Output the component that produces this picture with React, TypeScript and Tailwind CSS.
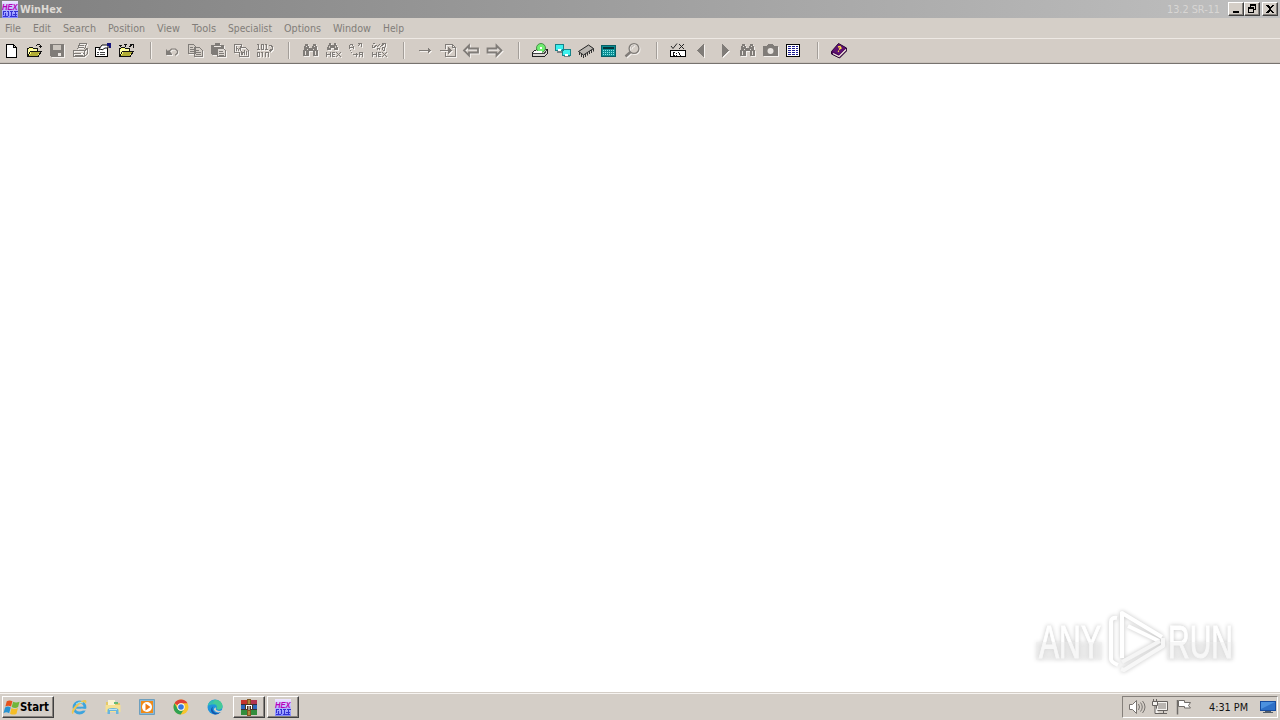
import React from 'react';

type Draw = React.ReactNode;

const ui = 'font-[DejaVu_Sans_Condensed,Noto_Sans,sans-serif]';
const raised =
  'border border-t-white border-l-white border-r-[#404040] border-b-[#404040] shadow-[inset_-1px_-1px_0_#87827d] bg-[#d4cec7]';

const G = '#807c78';

const menus: { label: string; cell: string; width: number }[] = [
  { label: 'File', cell: 'w-7', width: 16 },
  { label: 'Edit', cell: 'w-[30px]', width: 18 },
  { label: 'Search', cell: 'w-[45px]', width: 33 },
  { label: 'Position', cell: 'w-[49px]', width: 37 },
  { label: 'View', cell: 'w-[35px]', width: 23 },
  { label: 'Tools', cell: 'w-[36px]', width: 24 },
  { label: 'Specialist', cell: 'w-[56px]', width: 44 },
  { label: 'Options', cell: 'w-[49px]', width: 37 },
  { label: 'Window', cell: 'w-[50px]', width: 38 },
  { label: 'Help', cell: 'w-[34px]', width: 21 },
];

/* Single-line label fitted to the width of the bitmap system font. */
function Label({ text, width, size = 11, bold = false, fill }: { text: string; width: number; size?: number; bold?: boolean; fill: string }) {
  return (
    <svg width={width + 2} height="15" className="shrink-0 overflow-visible">
      <text x="0" y="11" fontSize={size} fontWeight={bold ? 700 : 400} fill={fill} textLength={width} lengthAdjust="spacingAndGlyphs" className={ui}>
        {text}
      </text>
    </svg>
  );
}

function Tool({ children, off = false }: { children: Draw; off?: boolean }) {
  return (
    <svg
      width="23"
      height="18"
      viewBox="0 0 23 18"
      shapeRendering="crispEdges"
      className={off ? 'shrink-0 drop-shadow-[1px_1px_0_#f4f1ee]' : 'shrink-0'}
    >
      {children}
    </svg>
  );
}

function Sep() {
  return (
    <div className="flex h-[17px] w-[23px] shrink-0 pl-3">
      <div className="w-px bg-[#a39e99]" />
      <div className="w-px bg-[#f3efeb]" />
    </div>
  );
}

const folder = (
  <>
    <path d="M4.5 14.5V6.5h1l1-1h3l1 1h4v2M4.5 14.5l3-5h11l-3.5 5z" fill="#ffff77" stroke="#111" />
    <path d="M5 13V7h9v2H7z" fill="#ffffa8" />
    <path d="M6 14l2.500-4h8.500l-2.500 4z" fill="#b3ae35" />
  </>
);

const binoculars = (
  <>
    <path d="M6 2h3v2h1v2h3V4h1V2h3v2h1v4h1v6h-5V9h-4v5H4V8h1V4h1z" fill={G} />
    <path d="M7 4h1M15 4h1M6 9v4M16 9v4M8 7h1M13.500 7h1" stroke="#e6e1dc" />
  </>
);

const smallBinoculars = (
  <>
    <path d="M7 1h2v2h3V1h2v2h1v2h1v3h-4V6H9v2H5V5h1V3h1z" fill={G} />
    <path d="M7.500 4v2M13.500 4v2" stroke="#d4cec7" />
  </>
);

const hexWord = (
  <path d="M4.500 10v5M8.500 10v5M4 12.500h4M10.500 10v5M10 10.500h3M10 12.500h3M10 14.500h3M14 10.500h1M15 11.500h1M16 12.500h1M15 13.500h1M14 14.500h1M17 11.500h1M18 10.500h1M17 13.500h1M18 14.500h1" stroke={G} fill="none" />
);

const groups: { off?: boolean; art: Draw }[][] = [
  [
    { art: <path d="M6.500 2.500h7l3 3v9.500h-10zM13.500 2.500v3h3" fill="#fff" stroke="#000" /> },
    { art: <>{folder}<path d="M12.500 3.500h1l1-1h2l1 1v2M15.500 4.500h3" stroke="#111" fill="none" /></> },
    {
      off: true,
      art: (
        <>
          <path d="M4 2h14v13H5l-1-1z" fill={G} />
          <path d="M7 3h8v5H7z" fill="#cbc5be" />
          <path d="M12 11h3v3h-3z" fill="#e9e5e1" />
        </>
      ),
    },
    {
      off: true,
      art: (
        <>
          <path d="M8.500 7.500l2-6h7l-2 6M10 3.500h5M9.500 5.500h5M4.500 8.500h11l3-2v5l-3 3h-11zM15.500 8.500v5M5 11.500h10M6 13.500h8M15.500 9l3-3" fill="none" stroke={G} />
          <path d="M12 11h2v1h-2z" fill="#fff" />
        </>
      ),
    },
    {
      art: (
        <>
          <path d="M3.500 5.500h12v9h-12z" fill="#fff" stroke="#000" />
          <path d="M5 10.500h2M8 10.500h5M5 12.500h2M8 12.500h5" stroke="#444" />
          <path d="M7 7l3-4h6v3h-3l-3 2-1-1-2 1z" fill="#fff" stroke="#111" shapeRendering="auto" />
          <path d="M15 1h4v5h-2V4h-2z" fill="#16167c" />
        </>
      ),
    },
    { art: <>{folder}<path d="M6.500 6L5 3M4 3.500h3M10.500 5V1.500M9 2.500h3M14.500 5l3-3M15 2.500h3v3" fill="none" stroke="#111" /></> },
  ],
  [
    {
      off: true,
      art: (
        <>
          <path d="M5 7l2 2 1-1 3 4v1H5z" fill={G} shapeRendering="auto" />
          <path d="M8 9.500l2.500-2.500h4l2 2v2l-2 2H14" fill="none" stroke={G} strokeWidth="1.200" shapeRendering="auto" />
        </>
      ),
    },
    { off: true, art: <path d="M4.500 2.500h5l2 2v7h-7zM6 5.500h3M6 7.500h4M6 9.500h4M10.500 5.500h5l3 3v6h-8zM12 8.500h3M12 10.500h5M12 12.500h5" fill="#d4cec7" stroke={G} /> },
    {
      off: true,
      art: (
        <>
          <path d="M4 3h4V1h5v2h4v10H5l-1-1z" fill={G} />
          <path d="M7 4h7v1H7z" fill="#ece7e2" />
          <path d="M10.500 6.500h6l2 2v6h-8zM12 9.500h4M12 11.500h5M12 13h5" fill="#ddd8d3" stroke={G} />
        </>
      ),
    },
    { off: true, art: <path d="M4.500 2.500h7v3h4l3 3v6h-9v-4h-5zM6.500 9V5l2 3 2-3v4M11.500 13V9l1 3 2-3v4M16.500 9v4" fill="none" stroke={G} /> },
    {
      off: true,
      art: <path d="M4 2.500h1.500v5M4 7.500h3M8.500 2.500h2v5h-2zM12 2.500h1.500v5M12 7.500h3M4.500 10.500h2v4h-2zM8 10.500h1.500v4M12.500 15v-4.500h3V15M16 3.500h2l1 1v3l-1 1h-2M17 7v3" fill="none" stroke={G} />,
    },
  ],
  [
    { off: true, art: binoculars },
    { off: true, art: <>{smallBinoculars}{hexWord}</> },
    {
      off: true,
      art: <path d="M4.500 7V4l1.500-2h1l1 2v3M4 5.500h4M12.500 4.500l3-3M13 1.500h3v3M5 8.500h1M6 10.500h1M8 12.500h5M11.500 10.500v4M14.500 15v-5h3v5M15 12.500h3" fill="none" stroke={G} />,
    },
    { off: true, art: <>{hexWord}<path d="M5 1.500h2M4.500 3v2h2l2-2M9 5l3-3M12.500 4.500l4-3M14 1.500h3v3M9.500 8V6h2v2M14.500 8V5h2v3h-2" fill="none" stroke={G} /></> },
  ],
  [
    { off: true, art: <path d="M5 8h9V6h1v1h1v1h1v1h-1v1h-1v1h-1V9H5z" fill={G} /> },
    { off: true, art: <><path d="M8.500 7V2.500h7l3 3v9h-10V10M15.500 2.500v3h3M3 8.500h10" fill="none" stroke={G} /><path d="M11 5l4 3.500-4 3.500z" fill={G} /></> },
    { off: true, art: <path d="M4 8.500l5-5v3h9v4H9v3z" fill="none" stroke={G} strokeWidth="1.800" shapeRendering="auto" /> },
    { off: true, art: <path d="M18.500 8.500l-5-5v3h-9v4h9v3z" fill="none" stroke={G} strokeWidth="1.800" shapeRendering="auto" /> },
  ],
  [
    {
      art: (
        <>
          <path d="M3.500 10.500l4-3h11v4l-3 3h-12z" fill="#d9d5d1" stroke="#222" />
          <circle cx="12" cy="6" r="4.500" fill="#70ef70" stroke="#4b8c4b" shapeRendering="auto" />
          <path d="M11 5h2v2h-2zM5 9h8v2H5z" fill="#fff" />
          <path d="M4 11.500h12M15 12l3-4" stroke="#444" />
        </>
      ),
    },
    {
      art: (
        <>
          <path d="M3.500 2.500h8v6h-8zM10.500 7.500h8v6h-8z" fill="#3df1ee" stroke="#16838a" />
          <path d="M5 9h5v2H5zM12 14h6v1h-6z" fill="#7c8387" />
          <path d="M6 7h3v2H6zM13 12h3v2h-3z" fill="#fff" />
        </>
      ),
    },
    {
      art: (
        <g shapeRendering="auto">
          <path d="M3.500 9.500L13.500 3l5 3.500-10 6.500z" fill="#b8b4af" stroke="#222" />
          <path d="M4.500 10v3M6.500 12v3M8.500 13v3M10.500 12v3M12.500 10.500v3M14.500 9v3M16.500 8v3M18.500 6.500v3" stroke="#333" />
        </g>
      ),
    },
    {
      art: (
        <>
          <path d="M3.500 3.500h14v10.500h-14z" fill="#0b8f95" stroke="#075f65" />
          <path d="M5 5h11v2H5z" fill="#06363a" />
          <path d="M5 8.500h12M5 10.500h12M5 12.500h12" stroke="#88eaea" strokeDasharray="1 1" />
        </>
      ),
    },
    {
      off: true,
      art: (
        <g shapeRendering="auto" fill="none" stroke={G}>
          <circle cx="13" cy="6.500" r="4.900" strokeWidth="1.300" />
          <path d="M9.500 10l-5 4.500" strokeWidth="2.500" />
          <path d="M10 6.500q0-3 3-3" stroke="#bbb5b0" />
        </g>
      ),
    },
  ],
  [
    {
      art: (
        <>
          <path d="M3.500 8.500h15v6h-15z" fill="#fff" stroke="#000" />
          <path d="M4 4l2 2.500L10 1.500M12 2l5 5M17 2l-5 5" fill="none" stroke="#222" shapeRendering="auto" />
          <path d="M8 10.500H6v3h2M9.500 11v1M9.500 13v1M11.500 10l2 4" fill="none" stroke="#111" />
        </>
      ),
    },
    { off: true, art: <path d="M14 2v13L7 8.500z" fill={G} /> },
    { off: true, art: <path d="M9 2v13l7-6.500z" fill={G} /> },
    { off: true, art: binoculars },
    {
      off: true,
      art: (
        <>
          <path d="M4 4h4l1-2h5l1 2h4v10H4z" fill={G} />
          <circle cx="11.500" cy="9" r="3" fill="#e7e3df" shapeRendering="auto" />
        </>
      ),
    },
    {
      art: (
        <>
          <path d="M4.500 2.500h13v12h-13z" fill="#fff" stroke="#050505" />
          <path d="M6 4.500h3M10 4.500h3M14 4.500h2M6 6.500h3M10 6.500h3M14 6.500h2M6 8.500h3M10 8.500h3M14 8.500h2M6 10.500h3M10 10.500h3M14 10.500h2M6 12.500h3M10 12.500h3M14 12.500h2" stroke="#1c1c91" />
        </>
      ),
    },
  ],
  [
    {
      art: (
        <g shapeRendering="auto">
          <path d="M3.500 9.500l7-8 8 4.500v3l-7 7-8-4z" fill="#4e075f" stroke="#24062e" />
          <path d="M5 11.500l6 3 7-7" fill="none" stroke="#f7f2df" strokeWidth="1.200" />
          <path d="M4.500 9l6-7 7 4-6 6.500z" fill="#5e1272" />
          <path d="M10 5l2-.5 1 1.500-2 1.300M10 9l1 .5" stroke="#ffd84a" strokeWidth="1.400" fill="none" />
        </g>
      ),
    },
  ],
];

function HexLogo() {
  return (
    <svg width="18" height="17" viewBox="0 0 18 17" className="shrink-0 overflow-visible">
      <defs>
        <linearGradient id="hexBlue" x2="0" y2="1">
          <stop stopColor="#eee6ff" />
          <stop offset="1" stopColor="#8289ff" />
        </linearGradient>
      </defs>
      <path fill="url(#hexBlue)" d="M1 0h16v17H1z" />
      <text x="1" y="8.500" textLength="15.500" lengthAdjust="spacingAndGlyphs" fontSize="9.500" className="font-['Liberation_Sans',sans-serif]" fontWeight="700" fontStyle="italic" fill="#b900b8">HEX</text>
      <path d="M2 10.500h3M6 10.500h2M9 10.500h3M13 10.500h4M2.500 11v3M4.500 12v3M7.500 11v4M10.500 11v4M14.500 11v4M2 15.500h5M9 15.500h7M12 13.500h4" stroke="#3432d2" />
    </svg>
  );
}

function TitleButton({ kind }: { kind: 'min' | 'restore' | 'close' }) {
  return (
    <button className={`flex h-[14px] w-4 items-center justify-center ${raised}`}>
      <svg width="12" height="12" viewBox="0 0 12 12" shapeRendering="crispEdges" className="shrink-0">
        {kind === 'min' && <path d="M3 8h6v2H3z" />}
        {kind === 'restore' && <path d="M4.500 4V1.500h5v5H8M4 2h6M2.500 4.500h5v5h-5zM2 5h6" fill="none" stroke="#000" />}
        {kind === 'close' && <path d="M2 2h2l2 2 2-2h2L7 6l3 4H8L6 8l-2 2H2l3-4z" />}
      </svg>
    </button>
  );
}

function StartFlag() {
  return (
    <svg width="17" height="17" viewBox="0 0 18 17" className="shrink-0">
      <path d="M4 2q3-2 6 0L8.500 7.500q-3-1.500-6 0z" fill="#e5531d" />
      <path d="M10.700 2.500q3 1.500 6.800 0L16 8q-3 2-6.800 0z" fill="#70b63b" />
      <path d="M2.200 8.500q3-2 6 0L6.500 14.500q-3-2-6 0z" fill="#2793d2" />
      <path d="M9 9q3 2 6.800 0l-1.500 6q-3 2-6.800 0z" fill="#f5bd26" />
    </svg>
  );
}

const launchers: Draw[] = [
  <>
    <circle cx="8.500" cy="8.500" r="5.500" fill="none" stroke="#3da4dd" strokeWidth="2.800" />
    <path d="M5 8.700h9.500" stroke="#3da4dd" strokeWidth="2" />
    <path d="M10 9.800h6v1.800h-6z" fill="#d4cec7" />
    <path d="M2 15C-2 14 4 4 13 1c3-.5 3 2 1.500 4 0-5-10 2-12.500 10z" fill="#ecc653" />
    <path d="M5 5q3-3 7-1" fill="none" stroke="#9ee3ff" />
  </>,
  <>
    <path d="M1 3h5l1-1h3v2h5v9H1z" fill="#e5c968" />
    <path d="M3 1h7v6H3z" fill="#f9f4d4" />
    <path d="M9 3h4v2H9z" fill="#65ba72" />
    <path d="M.500 6h15v7H.500z" fill="#f5e193" />
    <path d="M2.500 15v-4q0-2 5.500-2t5.500 2v4H11v-3H5v3z" fill="#68b5de" />
    <path d="M4 10.500h8" stroke="#bce5f5" />
  </>,
  <>
    <path d="M.500.500h15v15H.500z" fill="#8ab8d8" stroke="#6d9fbe" />
    <path d="M2 2h12v12H2z" fill="#ef8a18" />
    <circle cx="8" cy="8" r="5" fill="#fff" />
    <path d="M6.500 4.500l5 3.500-5 3.500z" fill="#ed7914" />
  </>,
  <>
    <circle cx="8" cy="8" r="7.500" fill="#f7c52d" />
    <path d="M1.500 4.250A7.500 7.500 0 0 1 14.500 4.250H8a3.750 3.750 0 0 0-3.300 2z" fill="#de4038" />
    <path d="M1.500 4.250A7.500 7.500 0 0 0 7.700 15.500L11 10a3.750 3.750 0 0 1-6.300 0z" fill="#30a252" />
    <circle cx="8" cy="8" r="3.700" fill="#fff" />
    <circle cx="8" cy="8" r="2.800" fill="#3678df" />
  </>,
  <>
    <circle cx="8" cy="8" r="7.500" fill="#2094dc" />
    <path d="M.700 7A7.500 7.500 0 0 1 15.500 7c.500 4-5 4.500-6 2.500 1-2-.5-4-3-4S2 6 .700 7z" fill="#35bfb2" />
    <path d="M8 1q7-.5 7.500 6c0 3-3 4-6 3 2-4-1-6-4-5z" fill="#4dce8d" opacity=".7" />
    <path d="M6.500 7c-2 2-1 6 2.500 7q3 .8 5-1.200A7.500 7.500 0 0 1 8 15.500C3 14 3 9 6.500 7z" fill="#1454ac" />
    <path d="M9 8.500q-1 3 3 3.500 2 0 3.700-1L14 13q-5 1.500-7-2-.5-2 2-2.500z" fill="#d4cec7" />
  </>,
];

function Archive() {
  return (
    <svg width="18" height="17" viewBox="0 0 18 17">
      <path d="M1 1h7v5H1z" fill="#c5332d" />
      <path d="M10 1h7v5h-7z" fill="#b33450" />
      <path d="M1 6h16v5H1z" fill="#2d67bd" />
      <path d="M1 11h16v5H1z" fill="#328e3c" />
      <path d="M1 5.500h16M1 10.500h16" stroke="#342d3a" />
      <path d="M7 0h4v17H7z" fill="#82551f" />
      <path d="M5 5h8v6H5z" fill="#4d3425" />
      <path d="M6 6.500h6M6.500 6v4M11.500 6v4M9 7v4" fill="none" stroke="#fff" />
      <path d="M8 2h2M8 4h2M8 13h2M8 15h2" stroke="#e2bd5a" />
    </svg>
  );
}

function Watermark() {
  return (
    <svg width="210" height="72" viewBox="0 0 210 72" className="absolute right-[40px] bottom-[15px] overflow-visible drop-shadow-[0_0_2px_#c4c4c4]">
      <g fill="#fff" className="font-['Liberation_Sans_Narrow','Liberation_Sans',sans-serif]" fontSize="47" fontWeight="400" stroke="#fff" strokeWidth="1">
        <text x="9" y="53" textLength="62" lengthAdjust="spacingAndGlyphs">ANY</text>
        <text x="138" y="53" textLength="65" lengthAdjust="spacingAndGlyphs">RUN</text>
      </g>
      <path d="M6 37h66v18H6zM137 37h66v18h-66z" fill="#eeeeee" opacity=".45" />
      <g fill="none" strokeLinejoin="round" stroke="#fff" strokeWidth="4">
        <path d="M87 13q-6-1-6 4v37q0 3 7 6" />
        <path d="M92 53V8l40 24" />
        <path d="M92 7v45M98 21l31 15" />
        <path d="M92 57l38-21" stroke="#f5f5f5" />
        <path d="M91 64l3 1 39-24v-8" stroke="#f7f7f7" />
      </g>
    </svg>
  );
}

export default function App() {
  return (
    <div className={`relative flex h-[720px] w-[1280px] flex-col overflow-hidden bg-white ${ui}`}>
      <header className="flex h-[18px] shrink-0 items-center bg-linear-to-r from-[#808080] to-[#c0c0c0]">
        <div className="flex w-[20px] pl-px"><HexLogo /></div>
        <Label text="WinHex" width={42} size={11} bold fill="#dedad5" />
        <div className="mr-[6px] ml-auto"><Label text="13.2 SR-11" width={53} fill="#d8d6d4" /></div>
        <div className="mr-[2px] flex">
          <TitleButton kind="min" />
          <TitleButton kind="restore" />
          <div className="ml-[2px]"><TitleButton kind="close" /></div>
        </div>
      </header>

      <nav className="flex h-5 shrink-0 items-center bg-[#d5cfc8] pl-[5px]">
        {menus.map((m) => (
          <div key={m.label} className={`flex shrink-0 ${m.cell}`}>
            <Label text={m.label} width={m.width} fill="#817d79" />
          </div>
        ))}
      </nav>

      <div className="flex h-[26px] shrink-0 border-t border-b border-t-[#eee9e4] border-b-[#77736f] bg-[#d4cdc6] pt-[3px] shadow-[inset_0_-1px_0_#c8c1ba]">
        {groups.map((g, i) => (
          <React.Fragment key={i}>
            {i > 0 && <Sep />}
            {g.map((t, j) => (
              <Tool key={j} off={t.off}>{t.art}</Tool>
            ))}
          </React.Fragment>
        ))}
      </div>

      <main className="relative min-h-0 flex-1">
        <Watermark />
      </main>

      <footer className="flex h-7 shrink-0 items-start border-t border-[#d4cec7] bg-[#d4cec7] pt-[3px] pl-[2px] shadow-[inset_0_1px_0_#f7f4f1]">
        <button className={`flex h-[22px] w-[52px] items-center ${raised}`}>
          <StartFlag />
          <Label text="Start" width={29} size={12} bold fill="#000" />
        </button>
        <div className="flex w-[179px] gap-[18px] pt-[3px] pl-[17px]">
          {launchers.map((art, i) => (
            <svg key={i} width="16" height="16" viewBox="0 0 16 16" className="shrink-0">{art}</svg>
          ))}
        </div>
        <button className={`flex h-[22px] w-8 items-center justify-center ${raised}`}><Archive /></button>
        <button className={`ml-[2px] flex h-[22px] w-8 items-center justify-center ${raised}`}><HexLogo /></button>

        <div className="mr-[2px] ml-auto flex h-[22px] w-[156px] items-center border border-t-[#85807b] border-r-white border-b-white border-l-[#85807b] pl-[5px]">
          <svg width="18" height="16" viewBox="0 0 18 16" className="shrink-0" fill="none" stroke="#77736f">
            <path d="M1.500 5.500h3l4-4v13l-4-4h-3z" fill="#fff" />
            <path d="M10.500 5q2 3 0 6M12.500 3.500q3.500 4.500 0 9M14.500 2q5 6 0 12" />
          </svg>
          <svg width="18" height="16" viewBox="0 0 18 16" className="ml-[6px] shrink-0" fill="#f4f2ef" stroke="#65615e">
            <path d="M4.500 2.500h11v9h-11zM7 14.500h8M11.500 12v2" />
            <path d="M6 4h8v6H6z" fill="#b9b5b1" stroke="none" />
            <path d="M.500 2.500h5v4h-5zM1.500 2V0M4.500 2V0M3 7v7.500h4" />
          </svg>
          <svg width="18" height="16" viewBox="0 0 18 16" className="ml-[6px] shrink-0" fill="#fff" stroke="#706c69">
            <path d="M1.500 1v14.500" strokeWidth="1.500" />
            <path d="M2.500 1.500h6v2h6l-2 3 2 2.500h-6V7.500h-6z" />
          </svg>
          <div className="ml-[15px]"><Label text="4:31 PM" width={39} fill="#111" /></div>
          <svg width="16" height="14" viewBox="0 0 16 14" className="ml-[10px] shrink-0">
            <path d="M0 1h16v10H0z" fill="#164b9e" />
            <path d="M1 2h14v8H1z" fill="#2e70c7" />
            <path d="M1 2h14L1 9z" fill="#4c91df" />
            <path d="M5 11h6v1h2v1H3v-1h2z" fill="#525d69" />
          </svg>
        </div>
      </footer>
    </div>
  );
}
